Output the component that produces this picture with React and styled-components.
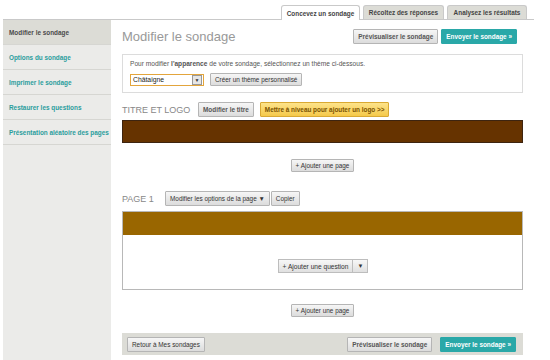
import React from "react";
import styled, { createGlobalStyle, css } from "styled-components";

const GlobalStyle = createGlobalStyle`
  html, body {
    margin: 0;
    padding: 0;
    background: #fff;
  }
  body {
    font-family: "Liberation Sans", Arial, sans-serif;
  }
`;

const Page = styled.div`
  width: 550px;
  height: 360px;
  overflow: hidden;
  padding-left: 3px;
  box-sizing: border-box;
`;

const TabBar = styled.div`
  display: flex;
  justify-content: flex-end;
  align-items: flex-end;
  gap: 3px;
  height: 14px;
  padding: 5px 7px 0 0;
  width: 524px;
  border-bottom: 1px solid #c9c9c9;
`;

const Tab = styled.div`
  display: flex;
  align-items: center;
  justify-content: center;
  box-sizing: border-box;
  height: ${(p) => (p.$active ? "15px" : "14px")};
  margin-bottom: ${(p) => (p.$active ? "-1px" : "0")};
  width: ${(p) => p.$w}px;
  font-size: 6.4px;
  font-weight: bold;
  white-space: nowrap;
  color: #444;
  border: 1px solid #c9c9c9;
  border-bottom: none;
  border-radius: 3px 3px 0 0;
  background: ${(p) => (p.$active ? "#fff" : "#dcdcd6")};
`;

const Body = styled.div`
  display: flex;
  height: 340px;
`;

const Sidebar = styled.ul`
  list-style: none;
  margin: 0;
  padding: 0;
  width: 108px;
  background: #ebebe9;
  flex-shrink: 0;
`;

const SideItem = styled.li`
  height: 24px;
  display: flex;
  align-items: center;
  padding-left: 6px;
  font-size: 6.4px;
  font-weight: bold;
  border-bottom: 1px solid #d6d6d2;
  color: ${(p) => (p.$active ? "#4a4a4a" : "#2a9d9d")};
  background: ${(p) => (p.$active ? "#dcdcd6" : "transparent")};
  white-space: nowrap;
`;

const Main = styled.div`
  width: 401px;
  margin-left: 11px;
  display: flex;
  flex-direction: column;
`;

const Header = styled.div`
  display: flex;
  align-items: center;
  justify-content: space-between;
  margin-top: 9px;
  height: 15px;
  padding-right: 6px;
`;

const Title = styled.h1`
  margin: 0;
  font-size: 13px;
  font-weight: normal;
  color: #999;
`;

const BtnGroup = styled.div`
  display: flex;
  gap: ${(p) => p.$gap || 3}px;
`;

const Button = styled.button`
  font-family: "Liberation Sans", Arial, sans-serif;
  font-size: 6.4px;
  height: 15px;
  padding: 0 4px;
  margin: 0;
  color: #333;
  border: 1px solid #b5b5b5;
  border-radius: 1px;
  background: linear-gradient(#f6f6f6, #dcdcdc);
  white-space: nowrap;
  cursor: pointer;
  ${(p) =>
    p.$bold &&
    css`
      font-weight: bold;
      color: #555;
    `}
  ${(p) =>
    p.$teal &&
    css`
      background: #2aa8a8;
      border-color: #2aa8a8;
      color: #fff;
      font-weight: bold;
    `}
  ${(p) =>
    p.$gold &&
    css`
      background: linear-gradient(#fde38a, #f5c94a);
      border-color: #d9a933;
      color: #7a5200;
      font-weight: bold;
    `}
  ${(p) =>
    p.$small &&
    css`
      height: 13px;
    `}
`;

const ThemeBox = styled.div`
  margin-top: 10px;
  border: 1px solid #dcdcdc;
  width: 401px;
  box-sizing: border-box;
  padding: 5px 7px 6px;
  font-size: 6.6px;
  color: #555;
`;

const ThemeRow = styled.div`
  display: flex;
  align-items: center;
  gap: 6px;
  margin-top: 6px;
`;

const Select = styled.div`
  display: flex;
  align-items: center;
  justify-content: space-between;
  box-sizing: border-box;
  width: 74px;
  height: 12px;
  border: 1px solid #e3a53c;
  padding-left: 2px;
  font-size: 6.8px;
  color: #222;
  background: #fff;
`;

const SelectArrow = styled.span`
  display: flex;
  align-items: center;
  justify-content: center;
  width: 8px;
  height: 8px;
  margin-right: 1px;
  border: 1px solid #999;
  background: #e6e6e6;
  font-size: 5px;
  color: #333;
`;

const SectionHead = styled.div`
  display: flex;
  align-items: center;
  gap: ${(p) => p.$gap || 6}px;
  margin-top: ${(p) => p.$top}px;
`;

const SectionLabel = styled.span`
  font-size: 9px;
  color: #888;
  width: ${(p) => p.$w}px;
`;

const TitleBar = styled.div`
  margin-top: 3px;
  height: 23px;
  box-sizing: border-box;
  background: #663300;
  border: 1px solid #3d2410;
`;

const Centered = styled.div`
  display: flex;
  justify-content: center;
  margin-top: ${(p) => p.$top}px;
`;

const PageBox = styled.div`
  margin-top: 5px;
  height: 79px;
  box-sizing: border-box;
  border: 1px solid #b8b8b8;
  display: flex;
  flex-direction: column;
`;

const PageHeader = styled.div`
  height: 23px;
  background: #996600;
`;

const PageContent = styled.div`
  flex: 1;
  display: flex;
  justify-content: center;
  padding-top: 24px;
  padding-left: 1px;
`;

const SplitButton = styled.div`
  display: flex;
  height: 12px;
  border: 1px solid #bdbdbd;
  background: linear-gradient(#f7f7f7, #e0e0e0);
  color: #333;
`;

const SplitPart = styled.span`
  display: flex;
  align-items: center;
  padding: 0 ${(p) => p.$pad}px;
  border-left: ${(p) => (p.$divider ? "1px solid #bdbdbd" : "none")};
  font-size: ${(p) => p.$size || 6.6}px;
`;

const Footer = styled.div`
  margin-top: 16px;
  height: 22px;
  background: #dcdcd6;
  display: flex;
  align-items: center;
  justify-content: space-between;
  padding: 0 7px 0 5px;
`;

export default function App() {
  return (
    <>
      <GlobalStyle />
      <Page>
        <TabBar>
          <Tab $active $w={79}>Concevez un sondage</Tab>
          <Tab $w={81}>Récoltez des réponses</Tab>
          <Tab $w={80}>Analysez les résultats</Tab>
        </TabBar>
        <Body>
          <Sidebar>
            <SideItem $active>Modifier le sondage</SideItem>
            <SideItem>Options du sondage</SideItem>
            <SideItem>Imprimer le sondage</SideItem>
            <SideItem>Restaurer les questions</SideItem>
            <SideItem>Présentation aléatoire des pages</SideItem>
          </Sidebar>
          <Main>
            <Header>
              <Title>Modifier le sondage</Title>
              <BtnGroup>
                <Button $bold>Prévisualiser le sondage</Button>
                <Button $teal>Envoyer le sondage »</Button>
              </BtnGroup>
            </Header>

            <ThemeBox>
              Pour modifier <b>l'apparence</b> de votre sondage, sélectionnez un thème ci-dessous.
              <ThemeRow>
                <Select>
                  Châtaigne
                  <SelectArrow>▼</SelectArrow>
                </Select>
                <Button $small>Créer un thème personnalisé</Button>
              </ThemeRow>
            </ThemeBox>

            <SectionHead $top={9}>
              <SectionLabel $w={70}>TITRE ET LOGO</SectionLabel>
              <Button $bold>Modifier le titre</Button>
              <Button $gold>Mettre à niveau pour ajouter un logo &gt;&gt;</Button>
            </SectionHead>
            <TitleBar />

            <Centered $top={16}>
              <Button $small>+ Ajouter une page</Button>
            </Centered>

            <SectionHead $top={19} $gap={1}>
              <SectionLabel $w={42}>PAGE 1</SectionLabel>
              <Button>Modifier les options de la page ▼</Button>
              <Button>Copier</Button>
            </SectionHead>
            <PageBox>
              <PageHeader />
              <PageContent>
                <SplitButton>
                  <SplitPart $pad={4}>+ Ajouter une question</SplitPart>
                  <SplitPart $pad={4} $divider $size={6}>▼</SplitPart>
                </SplitButton>
              </PageContent>
            </PageBox>

            <Centered $top={14}>
              <Button $small>+ Ajouter une page</Button>
            </Centered>

            <Footer>
              <Button>Retour à Mes sondages</Button>
              <BtnGroup $gap={8}>
                <Button $bold>Prévisualiser le sondage</Button>
                <Button $teal>Envoyer le sondage »</Button>
              </BtnGroup>
            </Footer>
          </Main>
        </Body>
      </Page>
    </>
  );
}
